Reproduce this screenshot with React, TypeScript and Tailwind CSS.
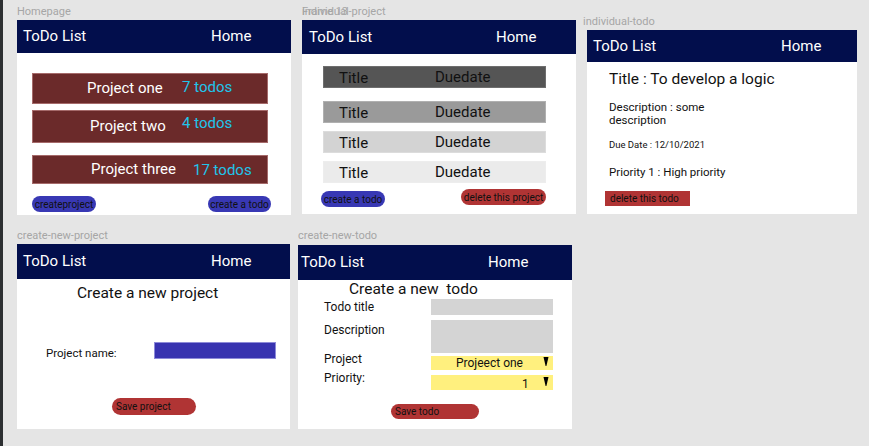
import React from 'react';

// canvas frames for the todo-list wireframes
const Header = ({ h, pl, w }: { h: string; pl: string; w: string }) => (
  <div className={`flex items-center bg-[#020e4c] text-white text-[15px] ${h}`}>
    <span className={`${pl} ${w}`}>ToDo List</span>
    <span>Home</span>
  </div>
);

const Label = ({ text, pos }: { text: string; pos: string }) => (
  <div className={`absolute text-[11px] leading-[12px] text-[#a6a6a6] ${pos}`}>{text}</div>
);

const Arrow = () => (
  <svg width="6" height="10" viewBox="0 0 6 10" className="mt-[-2px]">
    <polygon points="0.5,0 5.5,0 3.4,9 2.6,9" fill="#000" />
  </svg>
);

const projects = [
  { name: 'Project one', count: '7 todos', row: 'h-[31px]', mt: 'mt-0', namePad: 'pl-[54px] w-[149px]', countCls: 'mb-[2px]' },
  { name: 'Project two', count: '4 todos', row: 'h-[33px]', mt: 'mt-[6px]', namePad: 'pl-[57px] w-[149px]', countCls: 'mb-[6px]' },
  { name: 'Project three', count: '17 todos', row: 'h-[29px]', mt: 'mt-[12px]', namePad: 'pl-[58px] w-[160px]', countCls: 'mt-[1px]' },
];

const todos = [
  { bg: 'bg-[#555555] border-[#6e6e6e]', mt: 'mt-[12px]' },
  { bg: 'bg-[#9a9a9a] border-[#b0b0b0]', mt: 'mt-[13px]' },
  { bg: 'bg-[#d3d3d3] border-[#dcdcdc]', mt: 'mt-[8px]' },
  { bg: 'bg-[#ebebeb] border-[#ededed]', mt: 'mt-[8px]' },
];

export default function App() {
  return (
    <div className="relative w-[869px] h-[446px] overflow-hidden bg-[#e5e5e5] font-['Roboto',sans-serif] text-[#111]">
      <div className="absolute left-0 top-0 w-[3px] h-full bg-[#2c2f31]" />

      <Label text="Homepage" pos="left-[17px] top-[6px]" />
      <div className="absolute left-[302px] top-[6px] text-[11px] leading-[12px] text-[#a6a6a6]">
        <span className="absolute left-0 top-0 whitespace-nowrap">Frame 13</span>
        <span className="absolute left-0 top-0 whitespace-nowrap">individual-project</span>
      </div>
      <Label text="individual-todo" pos="left-[583px] top-[16px]" />
      <Label text="create-new-project" pos="left-[17px] top-[230px]" />
      <Label text="create-new-todo" pos="left-[298px] top-[230px]" />

      {/* Homepage */}
      <div className="absolute left-[17px] top-[20px] w-[274px] h-[195px] bg-white">
        <Header h="h-[33px]" pl="pl-[6px]" w="w-[194px]" />
        <div className="pl-[15px] pt-[20px]">
          {projects.map((p) => (
            <div
              key={p.name}
              className={`flex items-center w-[236px] bg-[#6b2a2a] border border-[#a56a6a] text-[15px] ${p.row} ${p.mt}`}
            >
              <span className={`text-white ${p.namePad}`}>{p.name}</span>
              <span className={`text-[#20c4ea] ${p.countCls}`}>{p.count}</span>
            </div>
          ))}
          <div className="flex justify-between w-[239px] mt-[12px]">
            <div className="flex items-center justify-center w-[64px] h-[16px] rounded-full bg-[#3838b4] text-[10px] text-[#111]">
              createproject
            </div>
            <div className="flex items-center justify-center w-[63px] h-[16px] rounded-full bg-[#3838b4] text-[10px] text-[#111]">
              create a todo
            </div>
          </div>
        </div>
      </div>

      {/* individual project */}
      <div className="absolute left-[302px] top-[20px] w-[274px] h-[194px] bg-white">
        <Header h="h-[34px]" pl="pl-[7px]" w="w-[194px]" />
        <div className="pl-[21px]">
          {todos.map((t, i) => (
            <div key={i} className={`flex items-center w-[223px] h-[22px] border text-[15px] ${t.bg} ${t.mt}`}>
              <span className="pl-[15px] w-[111px] pt-[3px]">Title</span>
              <span>Duedate</span>
            </div>
          ))}
          <div className="flex items-start justify-between w-[225px] ml-[-2px] mt-[6px]">
            <div className="flex items-center justify-center w-[64px] h-[16px] mt-[2px] rounded-full bg-[#3838b4] text-[10px]">
              create a todo
            </div>
            <div className="flex items-center justify-center w-[85px] h-[16px] rounded-full bg-[#b03434] text-[10px]">
              delete this project
            </div>
          </div>
        </div>
      </div>

      {/* individual todo */}
      <div className="absolute left-[587px] top-[30px] w-[270px] h-[184px] bg-white">
        <Header h="h-[32px]" pl="pl-[6px]" w="w-[194px]" />
        <div className="pl-[22px]">
          <div className="mt-[8px] text-[15.5px] leading-[18px]">Title : To develop a logic</div>
          <div className="mt-[13px] text-[11.5px] leading-[13px]">
            Description : some
            <br />
            description
          </div>
          <div className="mt-[12px] text-[9.5px] leading-[12px]">Due Date : 12/10/2021</div>
          <div className="mt-[14px] text-[11.5px] leading-[15px]">Priority 1 : High priority</div>
          <div className="flex items-center w-[85px] h-[15px] ml-[-4px] mt-[11px] pl-[5px] bg-[#b03434] text-[10px]">
            delete this todo
          </div>
        </div>
      </div>

      {/* create new project */}
      <div className="absolute left-[17px] top-[244px] w-[273px] h-[185px] bg-white">
        <Header h="h-[35px]" pl="pl-[6px]" w="w-[194px]" />
        <div className="pl-[60px] mt-[4px] text-[15.5px] leading-[20px]">Create a new project</div>
        <div className="flex items-start mt-[39px]">
          <span className="pl-[29px] w-[137px] mt-[3px] text-[11.5px] leading-[16px]">Project name:</span>
          <div className="w-[122px] h-[17px] bg-[#3833b0] border border-[#8d8ad8]" />
        </div>
        <div className="flex items-center w-[84px] h-[17px] ml-[95px] mt-[37px] pl-[4px] rounded-full bg-[#b03434] text-[10px]">
          Save project
        </div>
      </div>

      {/* create new todo */}
      <div className="absolute left-[298px] top-[245px] w-[274px] h-[184px] bg-white">
        <Header h="h-[35px]" pl="pl-[3px]" w="w-[190px]" />
        <div className="pl-[51px] mt-[-1px] text-[15.5px] leading-[20px]">Create a new&nbsp; todo</div>
        <div className="pl-[26px] text-[12px]">
          <div className="flex items-start">
            <span className="w-[107px] leading-[16px]">Todo title</span>
            <div className="w-[122px] h-[16px] bg-[#d4d4d4]" />
          </div>
          <div className="flex items-start mt-[5px]">
            <span className="w-[107px] mt-[2px] leading-[16px]">Description</span>
            <div className="w-[122px] h-[33px] bg-[#d4d4d4]" />
          </div>
          <div className="flex items-start mt-[3px]">
            <span className="w-[107px] mt-[-4px] leading-[14px]">Project</span>
            <div className="flex items-center w-[122px] h-[14px] bg-[#fff07e]">
              <span className="w-[112px] pl-[25px] leading-[14px]">Projeect one</span>
              <Arrow />
            </div>
          </div>
          <div className="flex items-start mt-[5px]">
            <span className="w-[107px] mt-[-4px] leading-[14px]">Priority:</span>
            <div className="flex items-center w-[122px] h-[15px] bg-[#fff07e]">
              <span className="w-[112px] pl-[91px] leading-[14px] mt-[2px]">1</span>
              <Arrow />
            </div>
          </div>
        </div>
        <div className="flex items-center w-[88px] h-[15px] ml-[93px] mt-[14px] pl-[4px] rounded-full bg-[#b03434] text-[10px]">
          Save todo
        </div>
      </div>
    </div>
  );
}
